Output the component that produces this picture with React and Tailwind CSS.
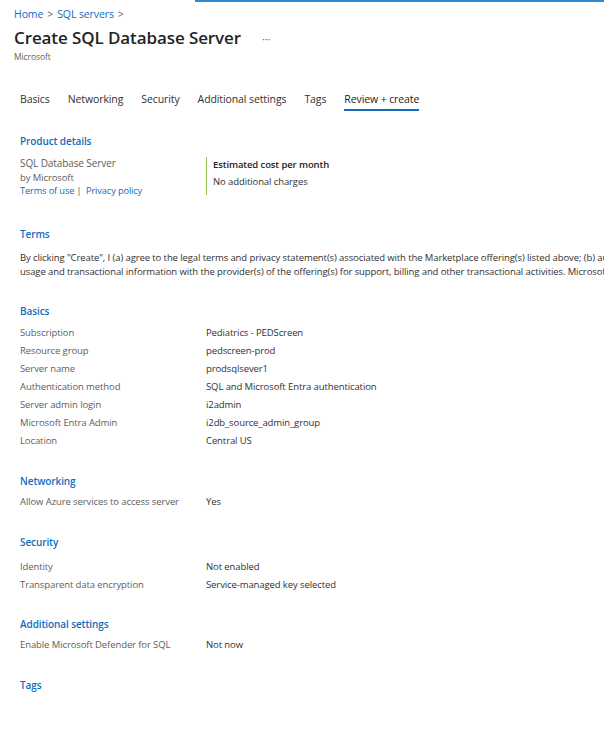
import React from "react";

const font = { fontFamily: '"Open Sans", "Noto Sans", Arial, sans-serif' };

function Row({ label, value }) {
  return (
    <div className="grid h-[18px] grid-cols-[186px_1fr] items-center">
      <div className="text-[#605e5c]">{label}</div>
      <div className="text-[#323130]">{value}</div>
    </div>
  );
}

function Heading({ children }) {
  return <div className="text-[10px] font-semibold text-[#0f6cbd] leading-[14px]">{children}</div>;
}

export default function App() {
  const tabs = ["Basics", "Networking", "Security", "Additional settings", "Tags", "Review + create"];
  return (
    <div className="w-[604px] h-[733px] overflow-hidden bg-white text-[9.5px] tracking-[-0.1px]" style={font}>
      <div className="flex">
        <div className="w-[195px]" />
        <div className="h-[2px] flex-1 bg-[#2b88d8]" />
      </div>
      <div className="pl-[14px] pt-[5px]">
        <div className="flex items-center gap-[4px] text-[10.5px] text-[#0f6cbd] leading-[14px]">
          <span>Home</span>
          <span className="text-[#605e5c]">&gt;</span>
          <span>SQL servers</span>
          <span className="text-[#605e5c]">&gt;</span>
        </div>
        <div className="mt-[6px] flex items-center">
          <h1 className="text-[17px] font-semibold text-[#242424] leading-[22px]">Create SQL Database Server</h1>
          <span className="ml-[21px] text-[11px] text-[#605e5c] leading-none">···</span>
        </div>
        <div className="mt-[2px] text-[8.5px] text-[#605e5c] leading-[12px]">Microsoft</div>
      </div>

      <div className="mt-[29px] flex pl-[20px] text-[10.5px] text-[#323130] leading-[14px]">
        {tabs.map((t, i) => (
          <div key={t} className={"flex flex-col " + (i < tabs.length - 1 ? "mr-[18px]" : "")}>
            <span className={i === tabs.length - 1 ? "text-[#242424]" : ""}>{t}</span>
            <div className={"mt-[3px] h-[2px] " + (i === tabs.length - 1 ? "bg-[#0f6cbd]" : "bg-transparent")} />
          </div>
        ))}
      </div>

      <div className="pl-[20px]">
        <div className="mt-[23px]"><Heading>Product details</Heading></div>
        <div className="mt-[9px] flex">
          <div className="w-[186px] shrink-0 text-[#605e5c] leading-[13.5px]">
            <div className="text-[10px]">SQL Database Server</div>
            <div>by Microsoft</div>
            <div className="text-[9.2px] text-[#0f6cbd]">
              Terms of use <span className="text-[#605e5c]">|</span>&nbsp; Privacy policy
            </div>
          </div>
          <div className="h-[38px] border-l-[1.5px] border-[#92c353] pl-[6px] pt-[1px]">
            <div className="font-semibold text-[#242424]">Estimated cost per month</div>
            <div className="mt-[3px] text-[#323130]">No additional charges</div>
          </div>
        </div>

        <div className="mt-[29px]"><Heading>Terms</Heading></div>
        <div className="mt-[10px] whitespace-nowrap text-[#323130] leading-[14px]">
          <div>By clicking "Create", I (a) agree to the legal terms and privacy statement(s) associated with the Marketplace offering(s) listed above; (b) authorize Microsoft to bill my current payment method</div>
          <div>usage and transactional information with the provider(s) of the offering(s) for support, billing and other transactional activities. Microsoft does not provide rights for third-party offerings.</div>
        </div>

        <div className="mt-[25px]"><Heading>Basics</Heading></div>
        <div className="mt-[7px]">
          <Row label="Subscription" value="Pediatrics - PEDScreen" />
          <Row label="Resource group" value="pedscreen-prod" />
          <Row label="Server name" value="prodsqlsever1" />
          <Row label="Authentication method" value="SQL and Microsoft Entra authentication" />
          <Row label="Server admin login" value="i2admin" />
          <Row label="Microsoft Entra Admin" value="i2db_source_admin_group" />
          <Row label="Location" value="Central US" />
        </div>

        <div className="mt-[23px]"><Heading>Networking</Heading></div>
        <div className="mt-[6px]">
          <Row label="Allow Azure services to access server" value="Yes" />
        </div>

        <div className="mt-[23px]"><Heading>Security</Heading></div>
        <div className="mt-[10px]">
          <Row label="Identity" value="Not enabled" />
          <Row label="Transparent data encryption" value="Service-managed key selected" />
        </div>

        <div className="mt-[22px]"><Heading>Additional settings</Heading></div>
        <div className="mt-[6px]">
          <Row label="Enable Microsoft Defender for SQL" value="Not now" />
        </div>

        <div className="mt-[23px]"><Heading>Tags</Heading></div>
      </div>
    </div>
  );
}
